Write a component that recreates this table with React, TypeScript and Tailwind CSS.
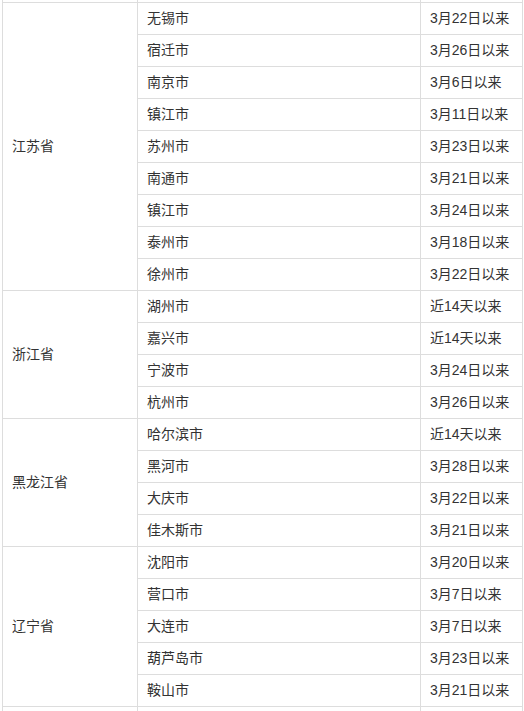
import React from 'react';

type Province = {
    name: string;
    cities: [string, string][];
};

const provinces: Province[] = [
    {
        name: '江苏省',
        cities: [
            ['无锡市', '3月22日以来'],
            ['宿迁市', '3月26日以来'],
            ['南京市', '3月6日以来'],
            ['镇江市', '3月11日以来'],
            ['苏州市', '3月23日以来'],
            ['南通市', '3月21日以来'],
            ['镇江市', '3月24日以来'],
            ['泰州市', '3月18日以来'],
            ['徐州市', '3月22日以来'],
        ],
    },
    {
        name: '浙江省',
        cities: [
            ['湖州市', '近14天以来'],
            ['嘉兴市', '近14天以来'],
            ['宁波市', '3月24日以来'],
            ['杭州市', '3月26日以来'],
        ],
    },
    {
        name: '黑龙江省',
        cities: [
            ['哈尔滨市', '近14天以来'],
            ['黑河市', '3月28日以来'],
            ['大庆市', '3月22日以来'],
            ['佳木斯市', '3月21日以来'],
        ],
    },
    {
        name: '辽宁省',
        cities: [
            ['沈阳市', '3月20日以来'],
            ['营口市', '3月7日以来'],
            ['大连市', '3月7日以来'],
            ['葫芦岛市', '3月23日以来'],
            ['鞍山市', '3月21日以来'],
        ],
    },
];

const cell = 'border border-[#dddddd] px-[9px] h-[32px] align-middle text-left';

const App: React.FC = () => {
    return (
        <div
            className="h-[711px] w-[524px] overflow-hidden bg-white text-[14px] text-[#333333]"
            style={{ fontFamily: '"Liberation Sans", "Noto Sans CJK SC", sans-serif' }}
        >
            {/* page is scrolled: the rows before and after only peek in at the edges */}
            <table className="ml-[2px] mt-[-30px] w-[520px] table-fixed border-collapse">
                <colgroup>
                    <col className="w-[135px]" />
                    <col className="w-[283px]" />
                    <col className="w-[102px]" />
                </colgroup>
                <tbody>
                    <tr>
                        <td className={cell} />
                        <td className={cell} />
                        <td className={cell} />
                    </tr>
                    {provinces.map((p) =>
                        p.cities.map(([city, since], i) => (
                            <tr key={p.name + i}>
                                {i === 0 && (
                                    <td className={cell} rowSpan={p.cities.length}>
                                        {p.name}
                                    </td>
                                )}
                                <td className={cell}>{city}</td>
                                <td className={cell}>{since}</td>
                            </tr>
                        ))
                    )}
                    <tr>
                        <td className={cell} />
                        <td className={cell} />
                        <td className={cell} />
                    </tr>
                </tbody>
            </table>
        </div>
    );
};

export default App;
